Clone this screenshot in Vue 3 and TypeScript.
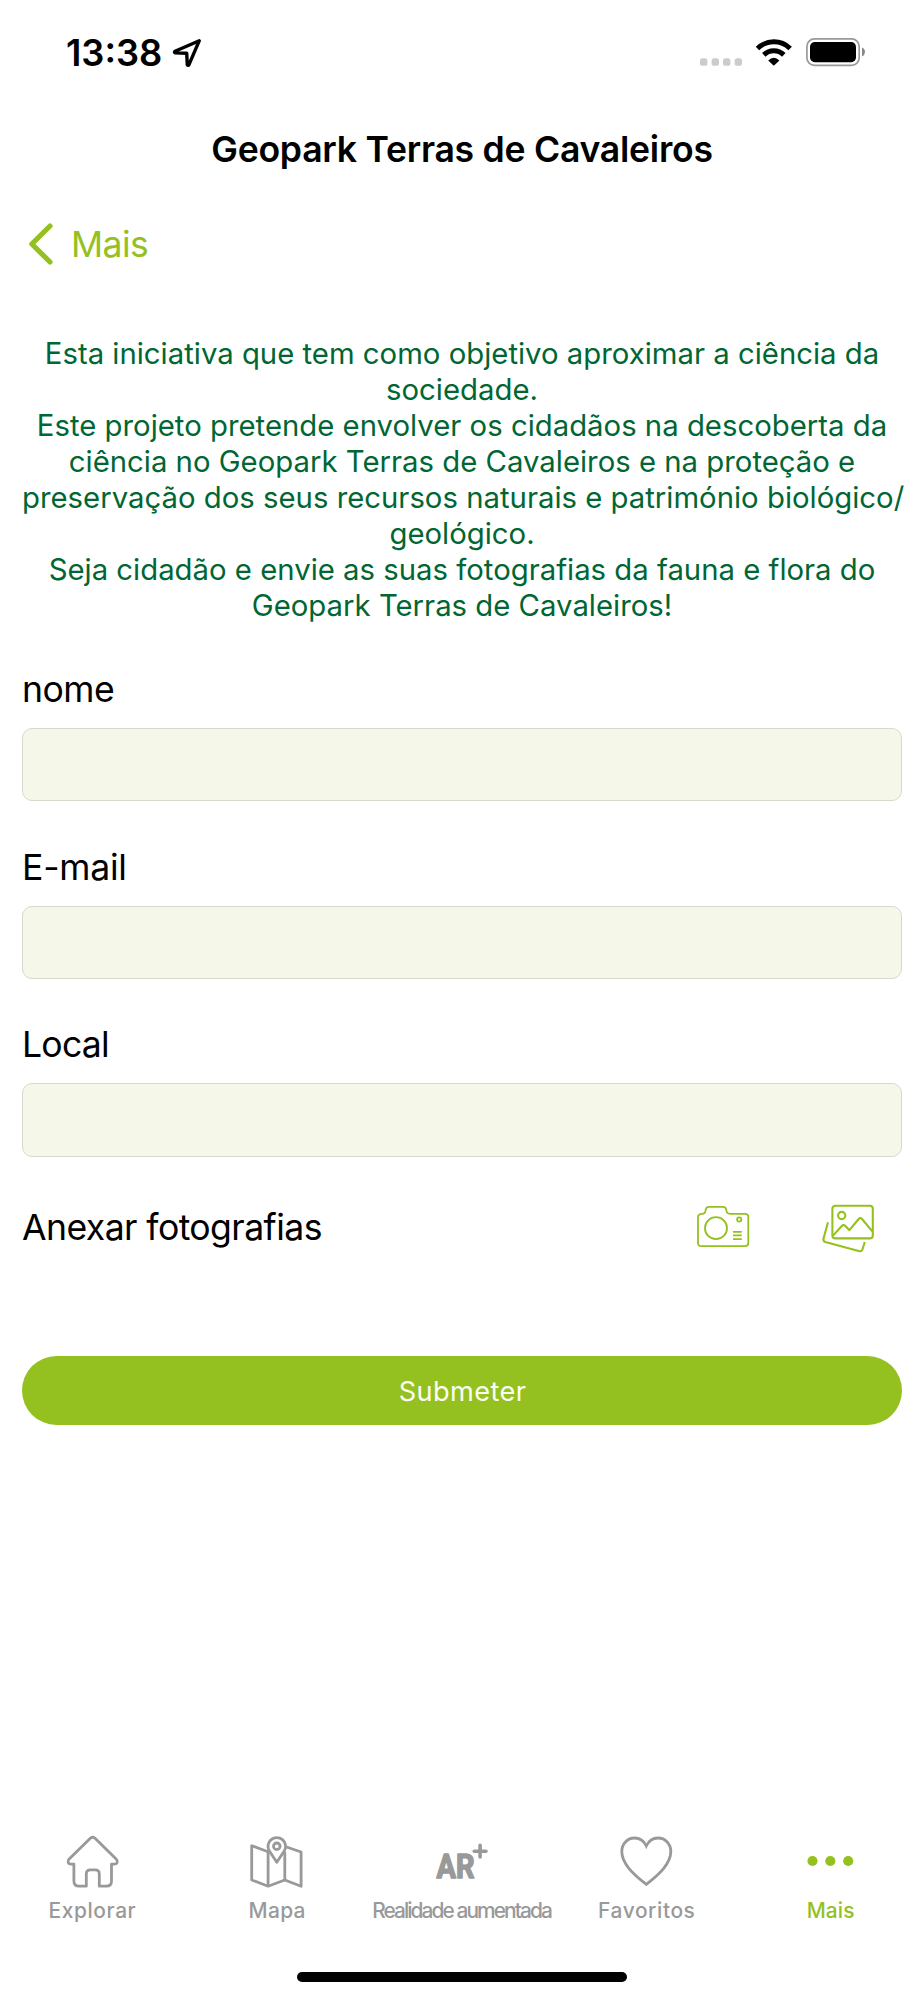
<script setup lang="ts">
import { reactive } from 'vue'

type FieldKey = 'nome' | 'email' | 'local'
type TabIcon = 'home' | 'map' | 'ar' | 'heart' | 'dots'

interface Field {
  key: FieldKey
  label: string
}

interface Tab {
  id: string
  label: string
  icon: TabIcon
  active?: boolean
}

const introLines: string[] = [
  'Esta iniciativa que tem como objetivo aproximar a ciência da',
  'sociedade.',
  'Este projeto pretende envolver os cidadãos na descoberta da',
  'ciência no Geopark Terras de Cavaleiros e na proteção e',
  'preservação dos seus recursos naturais e património biológico/',
  'geológico.',
  'Seja cidadão e envie as suas fotografias da fauna e flora do',
  'Geopark Terras de Cavaleiros!',
]

const fields: Field[] = [
  { key: 'nome', label: 'nome' },
  { key: 'email', label: 'E-mail' },
  { key: 'local', label: 'Local' },
]

const form = reactive<Record<FieldKey, string>>({ nome: '', email: '', local: '' })

const tabs: Tab[] = [
  { id: 'explorar', label: 'Explorar', icon: 'home' },
  { id: 'mapa', label: 'Mapa', icon: 'map' },
  { id: 'realidade', label: 'Realidade aumentada', icon: 'ar' },
  { id: 'favoritos', label: 'Favoritos', icon: 'heart' },
  { id: 'mais', label: 'Mais', icon: 'dots', active: true },
]
</script>

<template>
  <div class="screen">
    <header class="status-bar">
      <span class="time">13:38</span>
      <svg class="location" width="30" height="30" viewBox="0 0 30 30" fill="none" stroke="#000" stroke-width="3.4" stroke-linejoin="round">
        <path d="M27.3 2.7L3 13.2Q1.9 14.2 3.2 14.9L14.7 15.2L15.3 26.7Q16.2 28 17 26.6Z" />
      </svg>
      <svg class="system-icons" width="170" height="33" viewBox="0 0 170 33">
        <g fill="#ccc">
          <rect x="2" y="22.2" width="7.4" height="7.6" rx="2.6" />
          <rect x="13.6" y="22.2" width="7.4" height="7.6" rx="2.6" />
          <rect x="25" y="22.2" width="7.4" height="7.6" rx="2.6" />
          <rect x="36.6" y="22.2" width="7.4" height="7.6" rx="2.6" />
        </g>
        <g fill="none" stroke="#000" stroke-width="5">
          <path d="M59.5 12.5A23.3 23.3 0 0 1 92.1 12.5" />
          <path d="M65.8 18.9A14.4 14.4 0 0 1 85.8 18.9" />
        </g>
        <path d="M70.2 24.4Q75.8 19 81.4 24.4L75.8 29.8Z" />
        <rect x="108.9" y="2.9" width="52.3" height="26.4" rx="7.6" fill="none" stroke="#999" stroke-width="1.7" />
        <rect x="112" y="6" width="46" height="20.2" rx="4.8" />
        <path d="M164 11.6Q167 13 167 16Q167 19 164 20.6Z" fill="#888" />
      </svg>
    </header>

    <h1 class="title">Geopark Terras de Cavaleiros</h1>

    <nav class="back">
      <svg width="28" height="44" viewBox="0 0 28 44" fill="none" stroke="#94c11f" stroke-width="5.2" stroke-linecap="round" stroke-linejoin="round">
        <path d="M23 4L4.8 22L23 40" />
      </svg>
      <span>Mais</span>
    </nav>

    <main class="content">
      <p class="intro">
        <span v-for="line in introLines" :key="line">{{ line }}</span>
      </p>

      <form class="form" @submit.prevent>
        <label v-for="field in fields" :key="field.key" class="field">
          <span :class="['label', field.key]">{{ field.label }}</span>
          <input v-model="form[field.key]" type="text" />
        </label>

        <div class="attach">
          <span class="label attach-label">Anexar fotografias</span>
          <svg width="56" height="48" viewBox="0 0 56 48" fill="none" stroke="#94c11f" stroke-width="1.8" stroke-linejoin="round">
            <path d="M6 10.8C8.6 10.8 9.3 9.8 9.5 8C9.7 5 11 3.8 13 3.8H27Q30 3.8 30.3 7Q30.6 10.8 34 10.8H49Q52.3 10.8 52.3 14V40Q52.3 43.2 49 43.2H5.3Q2 43.2 2 40V14.5Q2 10.8 6 10.8Z" />
            <circle cx="20" cy="25.2" r="11" />
            <circle cx="43.2" cy="16.5" r="2.1" />
            <path d="M37 28.9H45.8M37 32.3H45.8M37 36.1H45.8" />
          </svg>
          <svg class="gallery" width="56" height="48" viewBox="0 0 56 48" fill="none" stroke="#94c11f" stroke-width="2.1" stroke-linejoin="round">
            <rect x="12.4" y="2.7" width="40.4" height="32.7" rx="3" />
            <circle cx="21.7" cy="12.5" r="3.6" />
            <path d="M13 32.6L21.8 23Q23.6 21 25.4 23L29.4 27.2L38.7 16Q40.3 14.1 42 16L52.6 28.6" />
            <path d="M8 19.2L3.5 35.6Q2.9 38.2 5.3 39.1L38.7 48.1Q41.6 48.8 42.5 46.3L44.8 39" />
          </svg>
        </div>

        <button class="submit" type="submit">Submeter</button>
      </form>
    </main>

    <footer class="tab-bar">
      <div v-for="tab in tabs" :key="tab.id" :class="['tab', tab.id, { active: tab.active }]">
        <svg width="56" height="56" viewBox="0 0 56 56" fill="none" stroke="currentColor" stroke-width="2.8" stroke-linejoin="round">
          <path
            v-if="tab.icon === 'home'"
            d="M26.6 4L5.2 24.9C3 27.2 4 30.2 7 30.2H9.9V47Q9.9 52.2 15 52.2H22.3V40Q22.3 35.9 26.4 35.9H31.2Q35.3 35.9 35.3 40V52.2H42.4Q47.5 52.2 47.5 47V30.2H50.3C53.3 30.2 54.4 27.2 52.1 24.9L30.8 4Q28.7 2.4 26.6 4Z"
          />
          <g v-else-if="tab.icon === 'map'">
            <path d="M19 17.7L2.7 11.7V46L19.1 52.2L35.8 46L52.1 52.2V18L37.5 13" />
            <path d="M19.1 17V52M35.8 18V46" />
            <path d="M27.8 28.3L20.2 16.8A8.8 8.8 0 1 1 35.4 16.8Z" />
            <circle cx="27.8" cy="12.3" r="3.3" />
          </g>
          <g v-else-if="tab.icon === 'ar'">
            <text class="ar-text" x="2.6" y="44.4" textLength="38" lengthAdjust="spacingAndGlyphs">AR</text>
            <path d="M46.1 11.4V23M40.2 17.3H52" stroke-width="3.6" stroke-linecap="round" />
          </g>
          <path
            v-else-if="tab.icon === 'heart'"
            d="M27.3 12C24.8 6.8 20.5 4 15.6 4C8.2 4 2.8 10 2.8 17.5C2.8 29.5 14 40 27.3 50.3C40.6 40 51.8 29.5 51.8 17.5C51.8 10 46.4 4 39 4C34.1 4 29.8 6.8 27.3 12Z"
            stroke-linejoin="miter"
          />
          <g v-else fill="currentColor" stroke="none">
            <circle cx="8.5" cy="27" r="5.1" />
            <circle cx="26.3" cy="27" r="5.1" />
            <circle cx="44.2" cy="27" r="5.1" />
          </g>
        </svg>
        <span class="tab-label">{{ tab.label }}</span>
      </div>
    </footer>

    <div class="home-indicator"></div>
  </div>
</template>

<style>
body {
  margin: 0;
  background: #fff;
}
</style>

<style scoped>
.screen {
  width: 924px;
  height: 2000px;
  display: flex;
  flex-direction: column;
  background: #fff;
  color: #000;
  font-family: Inter, "Liberation Sans", sans-serif;
  overflow: hidden;
}

.screen svg {
  flex: none;
  display: block;
}

.status-bar {
  height: 105px;
  flex: none;
  display: flex;
  align-items: center;
  padding: 0 56px 0 66px;
  box-sizing: border-box;
}

.time {
  font-size: 36.3px;
  font-weight: 600;
  line-height: 44px;
}

.location {
  margin-left: 9.3px;
}

.system-icons {
  margin-left: auto;
}

.title {
  margin: 0;
  height: 88px;
  line-height: 90px;
  flex: none;
  text-align: center;
  font-size: 35.6px;
  font-weight: 600;
  letter-spacing: -0.26px;
}

.back {
  height: 102px;
  flex: none;
  display: flex;
  align-items: center;
  padding-left: 27px;
  color: #94c11f;
  font-size: 35.6px;
  letter-spacing: -0.55px;
}

.back span {
  margin-left: 16px;
}

.content {
  flex: 1;
  padding: 41.4px 22px 0;
}

.intro {
  margin: 0;
  color: #006633;
  font-size: 29.3px;
  line-height: 36px;
  letter-spacing: 0.01px;
  text-align: center;
}

.intro span {
  display: block;
  white-space: nowrap;
}

.form {
  padding-top: 43.7px;
}

.field {
  display: flex;
  flex-direction: column;
  gap: 16px;
  margin-bottom: 44.3px;
}

.label {
  font-size: 35.6px;
  line-height: 44px;
  letter-spacing: -0.5px;
}

.label.email {
  letter-spacing: -0.25px;
}

.label.local {
  letter-spacing: -0.75px;
}

.label.attach-label {
  letter-spacing: -0.57px;
  margin-right: auto;
  padding-top: 2px;
}

.field input {
  height: 73.4px;
  box-sizing: border-box;
  padding: 0 16px;
  border: 1px solid #d6d9cd;
  border-radius: 10px;
  background: #f5f8e9;
  font: inherit;
  font-size: 32px;
  outline: none;
}

.attach {
  height: 60px;
  display: flex;
  align-items: center;
  margin-top: -4.6px;
  padding-right: 26px;
}

.gallery {
  margin-left: 68px;
  overflow: visible;
}

.submit {
  display: block;
  width: 100%;
  height: 69.4px;
  margin-top: 99.5px;
  padding: 2px 0 0 1px;
  border: 0;
  border-radius: 35px;
  background: #94c11f;
  color: #fbfdf5;
  font-family: inherit;
  font-size: 27.2px;
  letter-spacing: 0.384px;
}

.tab-bar {
  flex: none;
  display: grid;
  grid-template-columns: repeat(5, 1fr);
  margin-bottom: 47.7px;
}

.tab {
  display: flex;
  flex-direction: column;
  align-items: center;
  gap: 8px;
  min-width: 0;
  color: #999;
}

.tab.active {
  color: #94c11f;
}

.tab-label {
  font-size: 20.9px;
  font-weight: 500;
  line-height: 26px;
  letter-spacing: 0.6px;
  white-space: nowrap;
}

.mapa .tab-label {
  letter-spacing: 0.32px;
}

.realidade .tab-label {
  letter-spacing: -1.93px;
  padding-right: 1px;
}

.mais .tab-label {
  letter-spacing: 0.1px;
  padding-right: 2px;
}

.ar-text {
  font-family: Roboto, sans-serif;
  font-size: 32.6px;
  font-weight: 700;
  fill: currentColor;
  stroke-width: 1.5;
}

.home-indicator {
  flex: none;
  align-self: center;
  width: 330px;
  height: 10.7px;
  margin-bottom: 17.6px;
  border-radius: 6px;
  background: #000;
}
</style>
